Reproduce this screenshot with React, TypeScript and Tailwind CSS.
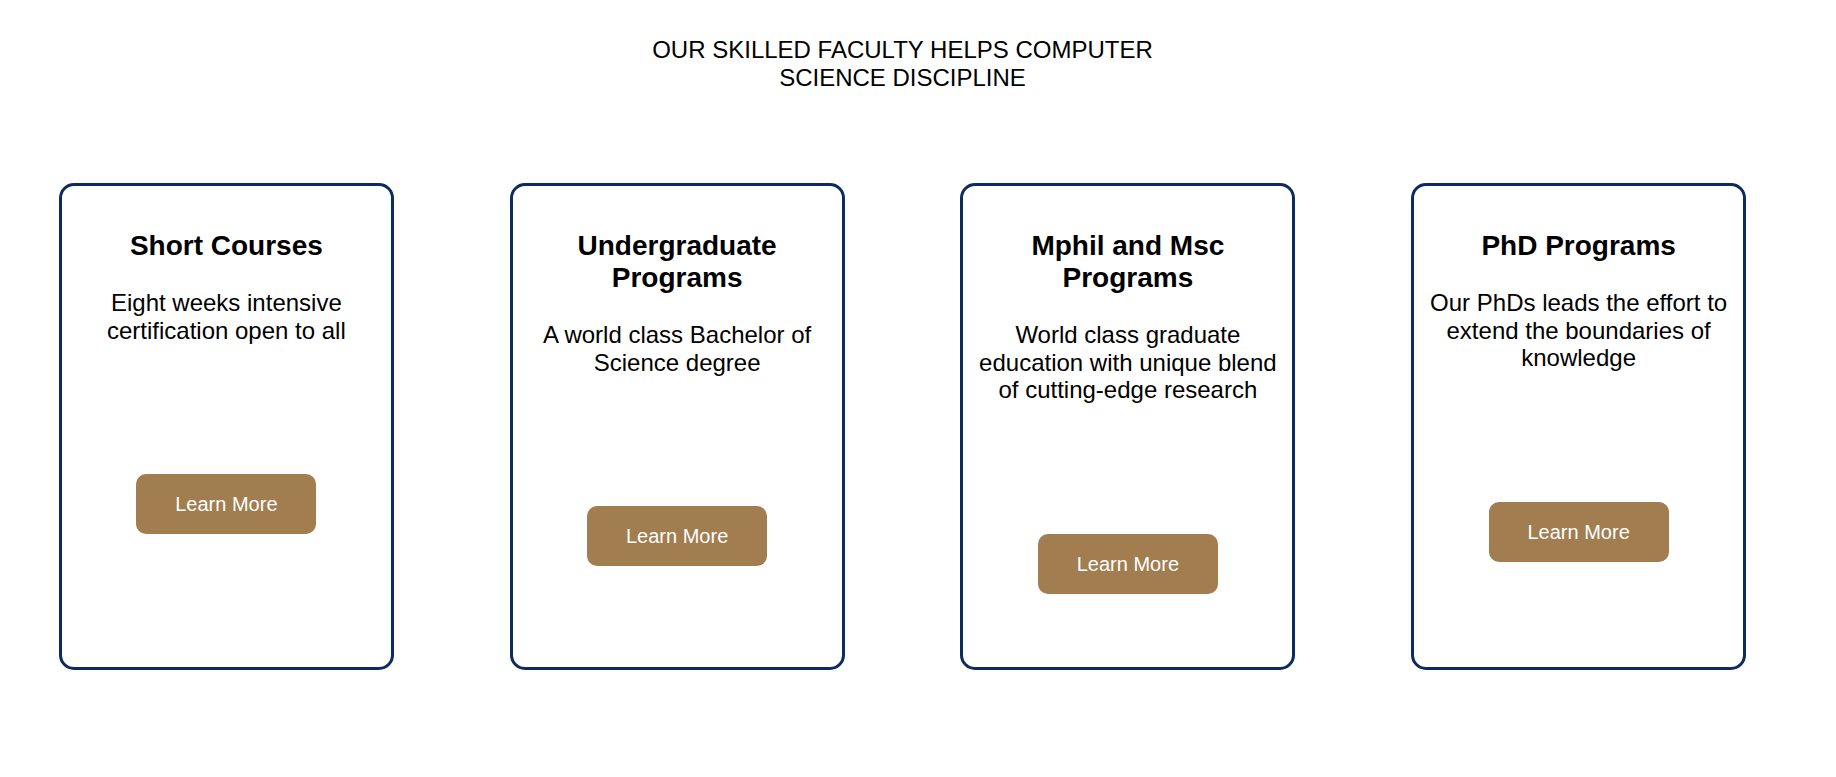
export default function App() {
	const programs = [
		{
			id: 1,
			title: 'Short Courses',
			description: 'Eight weeks intensive certification open to all',
		},
		{
			id: 2,
			title: 'Undergraduate Programs',
			description: 'A world class Bachelor of Science degree',
		},
		{
			id: 3,
			title: 'Mphil and Msc Programs',
			description: 'World class graduate education with unique blend of cutting-edge research',
		},
		{
			id: 4,
			title: 'PhD Programs',
			description: 'Our PhDs leads the effort to extend the boundaries of knowledge',
		},
	]

	return (
		<div className="min-h-[777px] bg-white font-['Liberation_Sans',Arial,sans-serif] text-black">
			<div className="w-[1804px] pl-px">
				<h2 className="mx-auto mt-[36px] w-[600px] text-center text-[24px] leading-[28px] font-normal">
					OUR SKILLED FACULTY HELPS COMPUTER SCIENCE DISCIPLINE
				</h2>
				<div className="mt-[91px] flex justify-around">
					{programs.map((program) => (
						<article
							key={program.id}
							className="flex h-[487px] w-[335px] flex-col items-center rounded-[15px] border-[3px] border-[#0c2b5e] px-[12px] pt-[44px]"
						>
							<h3 className="text-center text-[28px] leading-[32px] font-bold">{program.title}</h3>
							<p className="mt-[27px] text-center text-[24px] leading-[27.6px]">{program.description}</p>
							<button className="mt-[130px] h-[60px] w-[180px] rounded-[10px] bg-[#a17d50] text-[20px] text-white">
								Learn More
							</button>
						</article>
					))}
				</div>
			</div>
		</div>
	)
}
